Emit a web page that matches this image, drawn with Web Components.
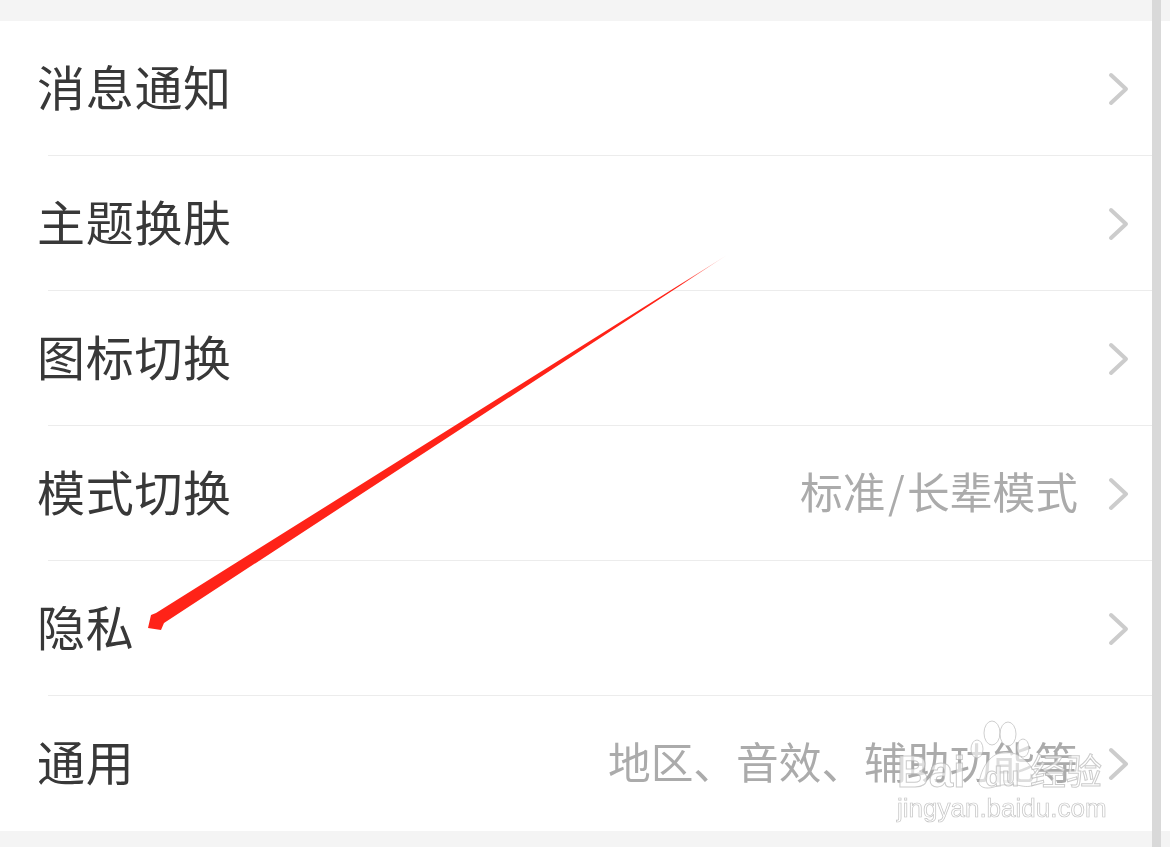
<!DOCTYPE html>
<html lang="zh">
<head>
<meta charset="utf-8">
<title>设置</title>
<style>
  html, body { margin: 0; padding: 0; background: #f4f4f4; }
  body { font-family: "Noto Sans CJK SC", "Liberation Sans", sans-serif; }
</style>
</head>
<body>
<settings-page>
  <setting-row>消息通知</setting-row>
  <setting-row>主题换肤</setting-row>
  <setting-row>图标切换</setting-row>
  <setting-row value="标准/长辈模式">模式切换</setting-row>
  <setting-row>隐私</setting-row>
  <setting-row value="地区、音效、辅助功能等" last>通用</setting-row>
</settings-page>

<script>
class SettingRow extends HTMLElement {
    constructor() {
        super();
        const shadow = this.attachShadow({ mode: "open" });
        const value = (this.getAttribute("value") || "").replace("/", `<span class="sep">/</span>`);
        shadow.innerHTML = /*html*/`
            <style>
                :host {
                    display: block;
                    height: 135px;
                    box-sizing: border-box;
                    padding-left: 37px;
                    font-family: "Noto Sans CJK SC", sans-serif;
                }
                .inner {
                    height: 100%;
                    box-sizing: border-box;
                    display: flex;
                    align-items: center;
                    padding-right: 40px;
                    position: relative;
                }
                :host(:not([last])) .inner::after {
                    content: "";
                    position: absolute;
                    left: 11px;
                    right: 10px;
                    bottom: 0;
                    height: 1px;
                    background: #ececec;
                }
                .label {
                    flex: 1;
                    font-size: 48px;
                    line-height: 60px;
                    letter-spacing: 0.7px;
                    color: #383838;
                    margin-bottom: 7px;
                    will-change: transform;
                }
                .value {
                    font-size: 42.7px;
                    line-height: 60px;
                    color: #ababab;
                    margin-right: 30px;
                    margin-bottom: 7px;
                    will-change: transform;
                }
                .sep { margin: 0 2.5px; }
                svg { display: block; width: 22px; height: 34px; }
            </style>
            <div class="inner">
                <span class="label"><slot></slot></span>
                <span class="value">${value}</span>
                <svg viewBox="0 0 22 34"><path d="M3 3 L18 17 L3 31" fill="none" stroke="#cccccc" stroke-width="4" stroke-linecap="round" stroke-linejoin="round"/></svg>
            </div>
        `;
    }
}

class SettingsPage extends HTMLElement {
    constructor() {
        super();
        const shadow = this.attachShadow({ mode: "open" });
        shadow.innerHTML = /*html*/`
            <style>
                :host {
                    display: block;
                    position: relative;
                    width: 1170px;
                    height: 847px;
                    overflow: hidden;
                    background: #f4f4f4;
                }
                .top { height: 21px; }
                .list { background: #fff; height: 810px; }
                .rail {
                    position: absolute;
                    left: 1152px;
                    top: 0;
                    bottom: 0;
                    width: 9px;
                    background: #d9d9d9;
                }
                .arrow { position: absolute; left: 0; top: 0; width: 1170px; height: 847px; }
                .mark {
                    position: absolute;
                    left: 896px;
                    top: 720px;
                    width: 210px;
                    height: 104px;
                    font-family: "Liberation Sans", "Noto Sans CJK SC", sans-serif;
                    color: rgba(255,255,255,0.6);
                    -webkit-text-stroke: 1px rgba(175,175,175,0.65);
                    will-change: transform;
                }
                .mark svg { position: absolute; left: 0; top: 0; width: 210px; height: 104px; }
                .mark span { position: absolute; white-space: nowrap; }
                .bai { left: 1px; top: 26px; font-size: 44px; line-height: 52px; font-weight: 700; }
                .du { left: 89px; top: 42px; font-size: 28px; line-height: 30px; font-weight: 700; }
                .jy { left: 134px; top: 30px; font-size: 36px; line-height: 38px; font-family: "Noto Sans CJK SC", sans-serif; }
                .url { left: 1px; top: 72px; font-size: 26px; line-height: 32px; -webkit-text-stroke: 0.7px rgba(170,170,170,0.7); color: #fff; }
            </style>
            <div class="top"></div>
            <div class="list"><slot></slot></div>
            <div class="rail"></div>
            <svg class="arrow" viewBox="0 0 1170 847">
                <defs>
                    <linearGradient id="fade" gradientUnits="userSpaceOnUse" x1="727" y1="255" x2="680" y2="285">
                        <stop offset="0" stop-color="#ff2318" stop-opacity="0.15"/>
                        <stop offset="1" stop-color="#ff2318"/>
                    </linearGradient>
                </defs>
                <polygon points="727,255 156,613 151,615 148,628 161,630 164,623" fill="url(#fade)"/>
            </svg>
            <div class="mark">
                <svg viewBox="0 0 210 104">
                    <g fill="rgba(255,255,255,0.6)" stroke="rgba(175,175,175,0.6)" stroke-width="1">
                        <ellipse cx="96" cy="13" rx="8" ry="12"/>
                        <ellipse cx="112" cy="14" rx="8" ry="12"/>
                        <ellipse cx="81" cy="29" rx="6" ry="9"/>
                        <ellipse cx="127" cy="28" rx="6" ry="9"/>
                        <path d="M84 58 C88 42 98 32 110 32 C124 32 134 44 140 54 C144 64 136 68 126 66 C116 64 106 64 98 67 C88 70 80 66 84 58 Z"/>
                    </g>
                </svg>
                <span class="bai">Bai</span>
                <span class="du">du</span>
                <span class="jy">经验</span>
                <span class="url">jingyan.baidu.com</span>
            </div>
        `;
    }
}

customElements.define("setting-row", SettingRow);
customElements.define("settings-page", SettingsPage);
</script>
</body>
</html>
